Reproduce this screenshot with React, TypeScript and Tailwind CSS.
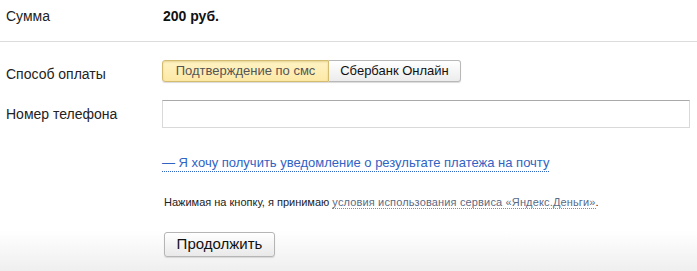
export default function App() {
  return (
    <div className="w-[697px] h-[271px] overflow-hidden bg-gradient-to-b from-white from-[85%] to-[#efefef] font-['Liberation_Sans',Arial,sans-serif] text-[13px] text-[#222]">
      {/* Сумма */}
      <div className="flex items-center h-[32px] pl-[6px] text-[14px]">
        <div className="w-[157px]">Сумма</div>
        <div className="font-bold text-[#111]">200 руб.</div>
      </div>
      <div className="h-[9px]" />
      <div className="h-px bg-[#dcdcdc]" />

      {/* Способ оплаты */}
      <div className="flex items-start pl-[6px] mt-[18px]">
        <div className="w-[156px] text-[14px] leading-[15px] pt-[7px]">Способ оплаты</div>
        <div className="flex h-[22px] rounded-[3px] shadow-[0_1px_1px_rgba(0,0,0,0.15)]">
          <button className="w-[167px] h-full rounded-l-[3px] border border-[#d3bc70] bg-gradient-to-b from-[#fff3c4] to-[#fde9a6] text-[#555] shadow-[inset_0_1px_2px_rgba(160,120,0,0.25)]">
            Подтверждение по смс
          </button>
          <button className="w-[132px] h-full rounded-r-[3px] border border-l-0 border-[#b8b8b8] bg-gradient-to-b from-white to-[#ececec] text-[#111]">
            Сбербанк Онлайн
          </button>
        </div>
      </div>

      {/* Номер телефона */}
      <div className="flex items-start pl-[6px] mt-[18px]">
        <div className="w-[156px] text-[14px] leading-[16px] pt-[6px]">Номер телефона</div>
        <input className="w-[528px] h-[28px] border border-[#d9d9d9] border-t-[#a9a9a9] bg-white outline-none" />
      </div>

      {/* ссылка */}
      <div className="pl-[162px] mt-[25px]">
        <a className="text-[#2f63c4] border-b border-dotted border-[#2f63c4] leading-[17px] inline-block">
          — Я хочу получить уведомление о результате платежа на почту
        </a>
      </div>

      {/* условия */}
      <div className="pl-[164px] mt-[21px] text-[11px] text-[#222]">
        Нажимая на кнопку, я принимаю{" "}
        <a className="text-[#5a6a84] border-b border-dotted border-[#8a8a8a] tracking-[0.15px]">
          условия использования сервиса «Яндекс.Деньги»
        </a>
        .
      </div>

      {/* кнопка */}
      <div className="pl-[164px] mt-[22px]">
        <button className="w-[111px] h-[25px] rounded-[3px] border border-[#b5b5b5] bg-gradient-to-b from-white to-[#e9e9e9] text-[15px] text-[#111] shadow-[0_1px_1px_rgba(0,0,0,0.12)]">
          Продолжить
        </button>
      </div>
    </div>
  );
}
